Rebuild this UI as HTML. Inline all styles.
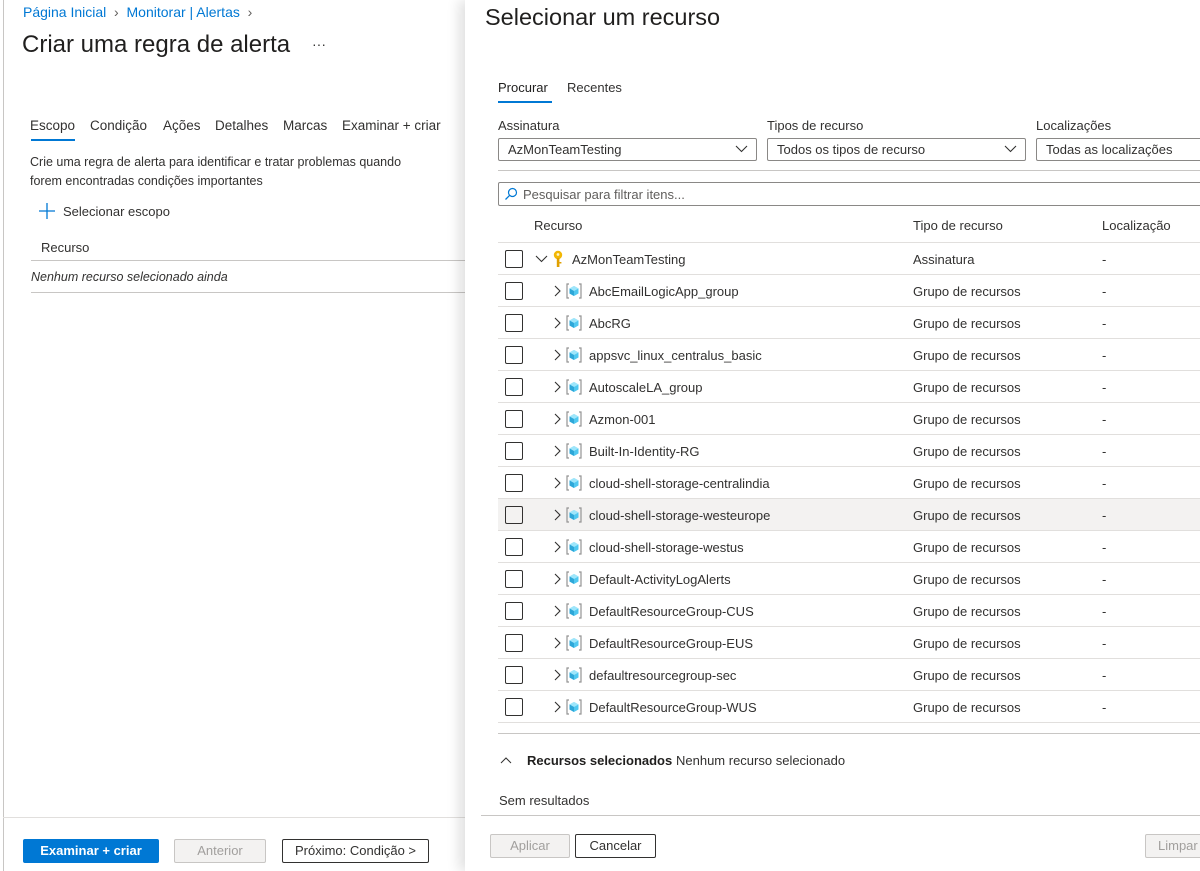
<!DOCTYPE html>
<html><head><meta charset="utf-8"><style>
*{box-sizing:border-box;margin:0;padding:0}
body{width:1200px;height:871px;overflow:hidden;background:#fff;font-family:"Liberation Sans",sans-serif;font-size:13px;color:#323130;position:relative}
.a{position:absolute;white-space:nowrap}
.link{color:#0078d4;font-size:14px}
.hl{position:absolute;height:1px;background:#e1dfdd}
.btn{position:absolute;height:24px;font-size:13px;text-align:center;line-height:22px;border:1px solid #8a8886;border-radius:2px}
.cb{position:absolute;left:505px;width:18px;height:18px;border:1px solid #323130;border-radius:2px}
.row{position:absolute;left:498px;width:702px;height:32px;border-bottom:1px solid #e1dfdd}
.dd{position:absolute;top:138px;height:23px;border:1px solid #8a8886;border-radius:2px;padding-left:9px;line-height:21px}
.dd svg{position:absolute;right:8px;top:6px}
.g .cb{top:7px}
.g{position:absolute;left:0;width:1200px;height:32px}
.g .ch{position:absolute;left:553px;top:10px}
.g .ic{position:absolute;left:566px;top:8px}
.g .n{position:absolute;left:589px;top:9px}
.g .t{position:absolute;left:913px;top:9px}
.g .l{position:absolute;left:1102px;top:9px}
</style></head><body>
<svg width="0" height="0" style="position:absolute"><defs>
<g id="rg"><path d="M3 1H1V15H3M13 1H15V15H13" fill="none" stroke="#949494" stroke-width="1.2"/><path d="M8 3L12.5 5.5V10.5L8 13L3.5 10.5V5.5Z" fill="#50c8f0"/><path d="M8 3L12.5 5.5L8 8L3.5 5.5Z" fill="#9ee6fb"/><path d="M8 8V13L3.5 10.5V5.5Z" fill="#2ea7d8"/></g>
<path id="cr" d="M2 1L7 6L2 11" fill="none" stroke="#323130" stroke-width="1.1"/>
</defs></svg>
<div style="position:absolute;left:3px;top:0;width:1px;height:871px;background:#c8c6c4"></div>
<div class="a link" style="left:23px;top:4px">Página Inicial <span style="color:#605e5c">&nbsp;›&nbsp;</span> Monitorar | Alertas <span style="color:#605e5c">&nbsp;›</span></div>
<div class="a" style="left:22px;top:31px;font-size:24px;color:#201f1e">Criar uma regra de alerta</div>
<div class="a" style="left:312px;top:36px;font-size:14px">···</div>
<div class="a" style="left:30px;top:118px;font-size:13.5px;color:#323130">Escopo</div>
<div style="position:absolute;left:31px;top:139px;width:44px;height:2px;background:#0078d4"></div>
<div class="a" style="left:90px;top:118px;font-size:13.5px">Condição</div>
<div class="a" style="left:163px;top:118px;font-size:13.5px">Ações</div>
<div class="a" style="left:215px;top:118px;font-size:13.5px">Detalhes</div>
<div class="a" style="left:283px;top:118px;font-size:13.5px">Marcas</div>
<div class="a" style="left:342px;top:118px;font-size:13.5px">Examinar + criar</div>
<div class="a" style="left:30px;top:153px;font-size:12.5px;line-height:19px">Crie uma regra de alerta para identificar e tratar problemas quando<br>forem encontradas condições importantes</div>
<svg class="a" style="left:39px;top:203px" width="16" height="16"><path d="M8 0V16M0 8H16" stroke="#0078d4" stroke-width="1.3"/></svg>
<div class="a" style="left:63px;top:204px">Selecionar escopo</div>
<div class="a" style="left:41px;top:240px">Recurso</div>
<div class="hl" style="left:31px;top:260px;width:434px;background:#c8c6c4"></div>
<div class="a" style="left:31px;top:270px;font-style:italic;font-size:12.5px">Nenhum recurso selecionado ainda</div>
<div class="hl" style="left:31px;top:292px;width:434px;background:#c8c6c4"></div>
<div class="hl" style="left:3px;top:817px;width:462px"></div>
<div class="btn" style="left:23px;top:839px;width:136px;background:#0078d4;border-color:#0078d4;color:#fff;font-weight:bold">Examinar + criar</div>
<div class="btn" style="left:174px;top:839px;width:92px;background:#f3f2f1;border-color:#c8c6c4;color:#a19f9d">Anterior</div>
<div class="btn" style="left:282px;top:839px;width:147px;border-color:#323130;color:#323130">Próximo: Condição &gt;</div>

<div style="position:absolute;left:465px;top:0;width:735px;height:871px;background:#fff;box-shadow:-6px 0 12px rgba(0,0,0,.12)"></div>
<div class="a" style="left:485px;top:4px;font-size:23.5px;color:#201f1e">Selecionar um recurso</div>
<div class="a" style="left:498px;top:80px;color:#201f1e">Procurar</div>
<div style="position:absolute;left:498px;top:101px;width:54px;height:2px;background:#0078d4"></div>
<div class="a" style="left:567px;top:80px">Recentes</div>
<div class="a" style="left:498px;top:118px">Assinatura</div>
<div class="a" style="left:767px;top:118px">Tipos de recurso</div>
<div class="a" style="left:1036px;top:118px">Localizações</div>
<div class="dd" style="left:498px;width:259px">AzMonTeamTesting<svg width="13" height="8"><path d="M1 1L6.5 6.5L12 1" fill="none" stroke="#323130" stroke-width="1.1"/></svg></div>
<div class="dd" style="left:767px;width:259px">Todos os tipos de recurso<svg width="13" height="8"><path d="M1 1L6.5 6.5L12 1" fill="none" stroke="#323130" stroke-width="1.1"/></svg></div>
<div class="dd" style="left:1036px;width:170px">Todas as localizações</div>
<div class="hl" style="left:498px;top:170px;width:702px;background:#c8c6c4"></div>
<div style="position:absolute;left:498px;top:182px;width:710px;height:24px;border:1px solid #8a8886;border-radius:2px"></div>
<svg class="a" style="left:504px;top:187px" width="14" height="14" viewBox="0 0 14 14"><circle cx="8.5" cy="5.5" r="4" fill="none" stroke="#0078d4" stroke-width="1.2"/><path d="M5.7 8.3L1.5 12.5" stroke="#0078d4" stroke-width="1.3"/></svg>
<div class="a" style="left:523px;top:187px;color:#605e5c">Pesquisar para filtrar itens...</div>
<div class="a" style="left:534px;top:218px">Recurso</div>
<div class="a" style="left:913px;top:218px">Tipo de recurso</div>
<div class="a" style="left:1102px;top:218px">Localização</div>
<div class="hl" style="left:498px;top:242px;width:702px"></div>

<div class="row" style="top:243px"></div>
<div class="cb" style="top:250px"></div>
<svg class="a" style="left:535px;top:255px" width="13" height="8"><path d="M1 1L6.5 6.5L12 1" fill="none" stroke="#323130" stroke-width="1.1"/></svg>
<svg class="a" style="left:551px;top:250px" width="14" height="18" viewBox="0 0 14 18"><circle cx="7" cy="5" r="4.2" fill="#f2b705"/><circle cx="7" cy="4.5" r="1.4" fill="#fff6c8"/><rect x="5.8" y="8" width="2.6" height="9" fill="#e0a000"/><rect x="8.4" y="12" width="2" height="1.5" fill="#e0a000"/></svg>
<div class="a" style="left:572px;top:252px">AzMonTeamTesting</div>
<div class="a" style="left:913px;top:252px">Assinatura</div>
<div class="a" style="left:1102px;top:252px">-</div>

<div class="row" style="top:499px;background:#f3f2f1"></div>
<div style="position:absolute;left:0;top:275px">
<div class="row" style="top:0"></div><div class="row" style="top:32px"></div><div class="row" style="top:64px"></div><div class="row" style="top:96px"></div><div class="row" style="top:128px"></div><div class="row" style="top:160px"></div><div class="row" style="top:192px"></div><div class="row" style="top:256px"></div><div class="row" style="top:288px"></div><div class="row" style="top:320px"></div><div class="row" style="top:352px"></div><div class="row" style="top:384px"></div><div class="row" style="top:416px"></div>
</div>

<div class="g" style="top:275px"><div class="cb"></div><svg class="ch" width="8" height="12"><use href="#cr"/></svg><svg class="ic" width="16" height="16"><use href="#rg"/></svg><span class="n">AbcEmailLogicApp_group</span><span class="t">Grupo de recursos</span><span class="l">-</span></div>
<div class="g" style="top:307px"><div class="cb"></div><svg class="ch" width="8" height="12"><use href="#cr"/></svg><svg class="ic" width="16" height="16"><use href="#rg"/></svg><span class="n">AbcRG</span><span class="t">Grupo de recursos</span><span class="l">-</span></div>
<div class="g" style="top:339px"><div class="cb"></div><svg class="ch" width="8" height="12"><use href="#cr"/></svg><svg class="ic" width="16" height="16"><use href="#rg"/></svg><span class="n">appsvc_linux_centralus_basic</span><span class="t">Grupo de recursos</span><span class="l">-</span></div>
<div class="g" style="top:371px"><div class="cb"></div><svg class="ch" width="8" height="12"><use href="#cr"/></svg><svg class="ic" width="16" height="16"><use href="#rg"/></svg><span class="n">AutoscaleLA_group</span><span class="t">Grupo de recursos</span><span class="l">-</span></div>
<div class="g" style="top:403px"><div class="cb"></div><svg class="ch" width="8" height="12"><use href="#cr"/></svg><svg class="ic" width="16" height="16"><use href="#rg"/></svg><span class="n">Azmon-001</span><span class="t">Grupo de recursos</span><span class="l">-</span></div>
<div class="g" style="top:435px"><div class="cb"></div><svg class="ch" width="8" height="12"><use href="#cr"/></svg><svg class="ic" width="16" height="16"><use href="#rg"/></svg><span class="n">Built-In-Identity-RG</span><span class="t">Grupo de recursos</span><span class="l">-</span></div>
<div class="g" style="top:467px"><div class="cb"></div><svg class="ch" width="8" height="12"><use href="#cr"/></svg><svg class="ic" width="16" height="16"><use href="#rg"/></svg><span class="n">cloud-shell-storage-centralindia</span><span class="t">Grupo de recursos</span><span class="l">-</span></div>
<div class="g" style="top:499px"><div class="cb"></div><svg class="ch" width="8" height="12"><use href="#cr"/></svg><svg class="ic" width="16" height="16"><use href="#rg"/></svg><span class="n">cloud-shell-storage-westeurope</span><span class="t">Grupo de recursos</span><span class="l">-</span></div>
<div class="g" style="top:531px"><div class="cb"></div><svg class="ch" width="8" height="12"><use href="#cr"/></svg><svg class="ic" width="16" height="16"><use href="#rg"/></svg><span class="n">cloud-shell-storage-westus</span><span class="t">Grupo de recursos</span><span class="l">-</span></div>
<div class="g" style="top:563px"><div class="cb"></div><svg class="ch" width="8" height="12"><use href="#cr"/></svg><svg class="ic" width="16" height="16"><use href="#rg"/></svg><span class="n">Default-ActivityLogAlerts</span><span class="t">Grupo de recursos</span><span class="l">-</span></div>
<div class="g" style="top:595px"><div class="cb"></div><svg class="ch" width="8" height="12"><use href="#cr"/></svg><svg class="ic" width="16" height="16"><use href="#rg"/></svg><span class="n">DefaultResourceGroup-CUS</span><span class="t">Grupo de recursos</span><span class="l">-</span></div>
<div class="g" style="top:627px"><div class="cb"></div><svg class="ch" width="8" height="12"><use href="#cr"/></svg><svg class="ic" width="16" height="16"><use href="#rg"/></svg><span class="n">DefaultResourceGroup-EUS</span><span class="t">Grupo de recursos</span><span class="l">-</span></div>
<div class="g" style="top:659px"><div class="cb"></div><svg class="ch" width="8" height="12"><use href="#cr"/></svg><svg class="ic" width="16" height="16"><use href="#rg"/></svg><span class="n">defaultresourcegroup-sec</span><span class="t">Grupo de recursos</span><span class="l">-</span></div>
<div class="g" style="top:691px"><div class="cb"></div><svg class="ch" width="8" height="12"><use href="#cr"/></svg><svg class="ic" width="16" height="16"><use href="#rg"/></svg><span class="n">DefaultResourceGroup-WUS</span><span class="t">Grupo de recursos</span><span class="l">-</span></div>
<div class="hl" style="left:498px;top:722px;width:702px"></div>

<div class="hl" style="left:498px;top:733px;width:702px;background:#c8c6c4"></div>
<svg class="a" style="left:500px;top:757px" width="12" height="7"><path d="M1 6L6 1L11 6" fill="none" stroke="#323130" stroke-width="1"/></svg>
<div class="a" style="left:527px;top:753px;font-weight:bold;color:#201f1e">Recursos selecionados</div>
<div class="a" style="left:676px;top:753px">Nenhum recurso selecionado</div>
<div class="a" style="left:499px;top:793px">Sem resultados</div>
<div class="hl" style="left:481px;top:815px;width:719px;background:#c8c6c4"></div>
<div class="btn" style="left:490px;top:834px;width:80px;background:#f3f2f1;border-color:#c8c6c4;color:#a19f9d">Aplicar</div>
<div class="btn" style="left:575px;top:834px;width:81px;border-color:#323130">Cancelar</div>
<div class="btn" style="left:1145px;top:834px;width:70px;background:#f3f2f1;border-color:#c8c6c4;color:#a19f9d;text-align:left;padding-left:12px">Limpar</div>
</body></html>
